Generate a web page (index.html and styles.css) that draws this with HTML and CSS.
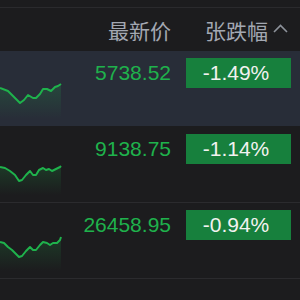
FILE: index.html
```html
<!DOCTYPE html>
<html lang="zh">
<head>
  <meta charset="UTF-8">
  <title>行情</title>
  <link rel="stylesheet" href="styles.css">
</head>
<body>
  <div class="board">
    <!-- 表头 -->
    <div class="head">
      <span></span>
      <span class="col-price">最新价</span>
      <span class="col-change">张跌幅
        <svg class="caret" width="15" height="9" viewBox="0 0 15 9"><polyline points="1,8 7.5,1.5 14,8" fill="none" stroke="#8d929b" stroke-width="1.6"/></svg>
      </span>
    </div>

    <div class="row active">
      <svg class="spark" width="62" height="40" viewBox="0 0 62 40">
        <defs>
          <linearGradient id="fade" x1="0" y1="0" x2="0" y2="1">
            <stop offset="0" stop-color="#1fb24c" stop-opacity="0.2"/>
            <stop offset="1" stop-color="#1fb24c" stop-opacity="0"/>
          </linearGradient>
        </defs>
        <polygon fill="url(#fade)" points="0,7 8,10 12,14 17,19 20,22 24,19 28,14 33,17 36,17 40,13 43,8 47,8 51,10 55,6 58,5 61,3 61,38 0,38"/>
        <polyline fill="none" stroke="#1fb24c" stroke-width="2" stroke-linejoin="round" points="0,7 8,10 12,14 17,19 20,22 24,19 28,14 33,17 36,17 40,13 43,8 47,8 51,10 55,6 58,5 61,3"/>
      </svg>
      <span class="price">5738.52</span>
      <span class="badge">-1.49%</span>
    </div>

    <div class="row">
      <svg class="spark" width="62" height="40" viewBox="0 0 62 40">
        <polygon fill="url(#fade)" points="0,10 5,11 10,14 15,18 19,24 22,23 26,18 30,14 33,18 36,18 39,13 43,11 46,13 49,12 52,14 56,12 60,10 61,9 61,38 0,38"/>
        <polyline fill="none" stroke="#1fb24c" stroke-width="2" stroke-linejoin="round" points="0,10 5,11 10,14 15,18 19,24 22,23 26,18 30,14 33,18 36,18 39,13 43,11 46,13 49,12 52,14 56,12 60,10 61,9"/>
      </svg>
      <span class="price">9138.75</span>
      <span class="badge">-1.14%</span>
    </div>

    <div class="row">
      <svg class="spark" width="62" height="40" viewBox="0 0 62 40">
        <polygon fill="url(#fade)" points="0,9 4,10 8,14 12,17 16,21 19,24 22,23 26,18 30,14 33,17 36,17 40,12 43,9 47,10 50,12 53,10 57,10 60,7 61,4 61,38 0,38"/>
        <polyline fill="none" stroke="#1fb24c" stroke-width="2" stroke-linejoin="round" points="0,9 4,10 8,14 12,17 16,21 19,24 22,23 26,18 30,14 33,17 36,17 40,12 43,9 47,10 50,12 53,10 57,10 60,7 61,4"/>
      </svg>
      <span class="price">26458.95</span>
      <span class="badge">-0.94%</span>
    </div>
  </div>
</body>
</html>
```

FILE: styles.css
```css
body {
  margin: 0;
  background: #1c1c1e;
  font-family: "Liberation Sans", "Noto Sans CJK SC", sans-serif;
}
.board {
  padding-top: 7px;
}

/* 表头 */
.head {
  display: grid;
  grid-template-columns: 62px 1fr 105px;
  column-gap: 15px;
  padding-right: 9px;
  height: 43px;
  align-items: center;
  border-top: 1px solid #2a2a2d;
  color: #a3a8b2;
  font-family: "Noto Sans CJK SC", sans-serif;
  font-size: 21px;
}
.col-price {
  text-align: right;
}
.col-change {
  display: flex;
  align-items: center;
  justify-content: flex-end;
  gap: 5px;
  padding-right: 3px;
}
.caret {
  margin-top: -3px;
}

/* 行 */
.row {
  display: grid;
  grid-template-columns: 62px 1fr 105px;
  column-gap: 15px;
  padding-right: 9px;
  height: 75px;
  align-items: start;
  border-bottom: 1px solid #2b2b2e;
}
.row.active {
  background: #282d38;
  border-bottom-color: #1c1c1e;
}
.spark {
  display: block;
  margin-top: 30px;
}
.price {
  margin-top: 7px;
  line-height: 30px;
  font-size: 21px;
  color: #1fb24c;
  text-align: right;
}
.badge {
  margin-top: 7px;
  height: 30px;
  line-height: 30px;
  background: #17803d;
  color: #f2f2f0;
  font-size: 21px;
  text-align: center;
  padding-right: 5px;
  box-sizing: border-box;
}
```
